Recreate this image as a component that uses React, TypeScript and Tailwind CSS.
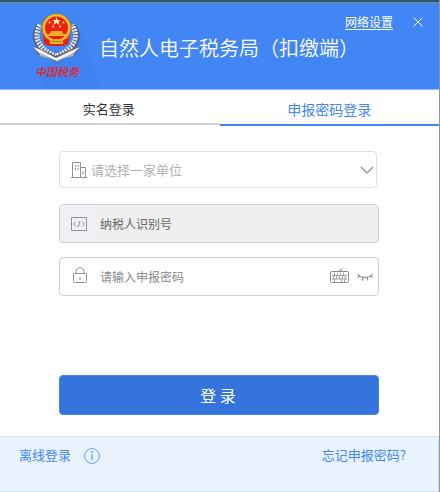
import React, { useState } from 'react';

const Emblem = () => (
  <svg viewBox="0 0 50 52" className="h-[52px] w-[50px]" aria-hidden="true">
    {/* Wheat ears */}
    <path d="M7 13C0 24 4 37 24 43C44 37 49 24 41 13" fill="none" stroke="#4d5f86" strokeWidth="6" />
    <path d="M8 12C1 24 6 36 24 43C42 36 48 24 40 12" fill="none" stroke="#e6e9ec" strokeWidth="5" strokeDasharray="2 1" />
    <path d="M9 13C2 24 6 37 24 44C42 37 48 24 40 13" fill="none" stroke="#7d879b" strokeWidth="1" strokeDasharray="1 2" />
    {/* Silver book */}
    <path d="M0 34L6 35L24 43L43 35L49 33L46 38L42 42L31 46L25 50L18 46L6 42L4 38Z" fill="#5a6170" />
    <path d="M1 34L7 36L24 45L43 36L48 34L45 37L42 40L25 48L7 40L4 37Z" fill="#f0f1f1" />
    <path d="M7 40L24 48L42 40L41 43L30 46L25 49L19 46L8 43Z" fill="#b4b7ba" />
    {/* National emblem */}
    <path d="M11 22L12 31L18 33H31L36 31L38 22Z" fill="#e4200f" />
    <ellipse cx="24.5" cy="15" rx="15" ry="14.5" fill="#a8700f" />
    <ellipse cx="24.5" cy="15" rx="14" ry="14" fill="#edbd36" />
    <ellipse cx="24.5" cy="15" rx="11.5" ry="11.5" fill="#ee210f" />
    <path d="M24.5 4L25.5 7H28.5L26.5 9L27.5 12L24.5 10L21.5 12L22.5 9L20.5 7H23.5Z" fill="#fff2a0" />
    <g fill="#ffe98a">
      <circle cx="17.5" cy="9.5" r="1.1" />
      <circle cx="21" cy="13.5" r="1.1" />
      <circle cx="28" cy="13.5" r="1.1" />
      <circle cx="31.5" cy="9.5" r="1.1" />
    </g>
    <path d="M18 20L19 18H30L31 20V21H34L35 23H14L15 21H18Z" fill="#f0ad27" />
    <path d="M17 26H32L31 31H18Z" fill="#e7b52e" />
    <path d="M19 28.5H30" stroke="#b9770f" strokeWidth="1" />
    <path d="M12 25L17 28L16 32M37 25L32 28L33 32" fill="none" stroke="#ee210f" strokeWidth="2" />
  </svg>
);

const BuildingIcon = () => (
  <svg viewBox="0 0 16 16" className="h-4 w-4" fill="none" stroke="#929292" aria-hidden="true">
    <path d="M0 15.5H16M1.5 15V.5H9.5V15M9.5 5.5H14.5V15M12 9V13" />
    <path d="M4.5 3V5M7 3V5M4.5 6V8M7 6V8" />
  </svg>
);

const CodeIcon = () => (
  <svg viewBox="0 0 16 14" className="h-[14px] w-4" fill="none" stroke="#929292" aria-hidden="true">
    <path d="M.5 .5H15.5V13.5H.5Z" />
    <path d="M5 4.5L2.5 7L5 9.5M11 4.5L13.5 7L11 9.5M9 4L7 10" />
  </svg>
);

const LockIcon = () => (
  <svg viewBox="0 0 14 17" className="h-[17px] w-[14px]" fill="none" stroke="#929292" aria-hidden="true">
    <rect x=".5" y="6.5" width="13" height="9" rx="1" />
    <path d="M3 6.5V4.5C3 2 4.5 .8 7 .8S11 2 11 4.5V6.5M7 10V13" />
  </svg>
);

const KeyboardIcon = () => (
  <svg viewBox="0 0 19 16" className="h-4 w-[19px]" fill="none" stroke="#8c8c8c" aria-hidden="true">
    <rect x=".5" y="3.5" width="18" height="11" rx="1" />
    <path d="M9 3L10 1.8H12L13 .5" strokeWidth=".9" />
    <path d="M2 7.5H17M2 11H17M4.5 4.5V7.5M7.5 4.5V7.5M10.5 4.5V7.5M13.5 4.5V7.5M3.5 8V11M6.5 8V11M9.5 8V11M12.5 8V11M15.5 8V11M4.5 11V14M11.5 11V14M14.5 11V14" strokeWidth=".8" />
  </svg>
);

const ClosedEyeIcon = () => (
  <svg viewBox="0 0 16 8" className="h-2 w-4" fill="none" stroke="#858585" strokeWidth="1.1" aria-hidden="true">
    <path d="M.5 1C4 5.7 12 5.7 15.5 1M3 3L.5 4.5M6 4.3L5 7.5M10 4.3L11 7.5M13 3L15.5 4.5" />
  </svg>
);

const App = () => {
  const [tab, setTab] = useState('password');
  const [showPassword, setShowPassword] = useState(false);

  return (
    <div className="flex min-h-screen flex-col border-r border-[#949494] bg-white font-['Noto_Sans_CJK_SC',sans-serif]">
      {/* Header */}
      <header className="relative flex h-[90px] shrink-0 border-t-2 border-b border-t-[#28596f] border-b-[#91b6f5] bg-[#4286f5]">
        <div className="absolute inset-x-0 top-0 h-px bg-[#82868a]" />
        <svg viewBox="0 0 70 70" className="absolute top-[17px] left-8 h-[70px] w-[70px]" aria-hidden="true">
          <path d="M49 12L68 70H12L8 55Z" fill="#3e81f0" />
        </svg>
        <div className="relative ml-8 flex w-[50px] flex-col items-center pt-[11px]">
          <Emblem />
          <span className="text-[11px] leading-3 font-medium whitespace-nowrap text-[#e51e25] italic">中国税务</span>
        </div>
        <h1 className="mt-[30px] ml-[17px] text-xl leading-8 font-[350] whitespace-nowrap text-white">自然人电子税务局（扣缴端）</h1>
        <div className="absolute top-3 right-4 flex items-center gap-5">
          <a href="#network" className="text-xs leading-4 text-white underline underline-offset-2">网络设置</a>
          <button type="button" aria-label="关闭" className="text-white">
            <svg viewBox="0 0 10 10" className="h-[10px] w-[10px]" stroke="currentColor" aria-hidden="true">
              <path d="M.5 .5L9.5 9.5M9.5 .5L.5 9.5" />
            </svg>
          </button>
        </div>
      </header>

      {/* Tabs */}
      <div role="tablist" className="grid grid-cols-2 items-start">
        <button
          type="button"
          role="tab"
          aria-selected={tab === 'name'}
          onClick={() => setTab('name')}
          className="h-[35px] border-b-2 border-[#d0d0d5] pt-1 pr-0.5 text-[13px] leading-7 text-[#333]"
        >
          实名登录
        </button>
        <button
          type="button"
          role="tab"
          aria-selected={tab === 'password'}
          onClick={() => setTab('password')}
          className="h-9 border-b-2 border-[#4286f5] pt-1 text-sm leading-7 text-[#4286f5]"
        >
          申报密码登录
        </button>
      </div>

      {/* Login form */}
      <form className="mb-[21px] flex flex-1 flex-col pt-[25px] pr-[60px] pl-[59px]" onSubmit={(e) => e.preventDefault()}>
        <div className="relative mr-0.5 h-[37px] rounded border border-[#dfdfe2]">
          <span className="absolute top-[10px] left-[11px]"><BuildingIcon /></span>
          <select
            aria-label="请选择一家单位"
            className="h-full w-full appearance-none bg-transparent pr-8 pl-[31px] text-[13px] text-[#b1b1b1]"
          >
            <option>请选择一家单位</option>
          </select>
          <svg viewBox="0 0 14 8" className="pointer-events-none absolute top-[14px] right-[2px] h-2 w-[14px]" fill="none" stroke="#8a8a8a" strokeWidth="1.2" aria-hidden="true">
            <path d="M1 1L7 7L13 1" />
          </svg>
        </div>

        <label className="mt-4 flex h-[39px] overflow-hidden rounded border border-[#cfcfd6] bg-[#efefef]">
          <span className="flex w-9 shrink-0 items-center bg-[#eff1f6] pl-[11px]"><CodeIcon /></span>
          <input
            type="text"
            aria-label="纳税人识别号"
            placeholder="纳税人识别号"
            readOnly
            className="min-w-0 flex-1 bg-transparent pl-1 text-xs outline-none placeholder:text-[#666]"
          />
        </label>

        <div className="mt-[14px] flex h-[39px] items-center rounded border border-[#cfcfd6] pr-[5px]">
          <label htmlFor="password" className="w-9 shrink-0 pb-0.5 pl-[13px]"><LockIcon /></label>
          <input
            id="password"
            type={showPassword ? 'text' : 'password'}
            aria-label="请输入申报密码"
            placeholder="请输入申报密码"
            className="min-w-0 flex-1 bg-transparent pl-1 text-xs outline-none placeholder:text-[#8a8a8a]"
          />
          <button type="button" aria-label="软键盘" className="mr-2 pb-0.5"><KeyboardIcon /></button>
          <button type="button" aria-label="显示密码" onClick={() => setShowPassword(!showPassword)}>
            <ClosedEyeIcon />
          </button>
        </div>

        <button type="submit" className="mt-auto h-10 rounded border border-[#4286f5] bg-[#3574dc] pr-0.5 text-base text-white">
          登 录
        </button>
      </form>

      {/* Footer */}
      <footer className="flex h-14 shrink-0 items-start justify-between border border-l-0 border-[#cee3f5] bg-[#e8f3fe] pt-2 pr-8 pl-[19px] text-[13px] leading-5 text-[#4286f5]">
        <div className="flex items-center gap-3">
          <a href="#offline">离线登录</a>
          <button type="button" aria-label="离线登录说明" className="pt-0.5">
            <svg viewBox="0 0 18 18" className="h-[18px] w-[18px]" fill="none" stroke="#69a2f8" aria-hidden="true">
              <circle cx="9" cy="9" r="7.5" />
              <path d="M9 7.5V13M9 4V6" strokeWidth="1.5" />
            </svg>
          </button>
        </div>
        <a href="#forgot">忘记申报密码?</a>
      </footer>
    </div>
  );
};

export default App;
